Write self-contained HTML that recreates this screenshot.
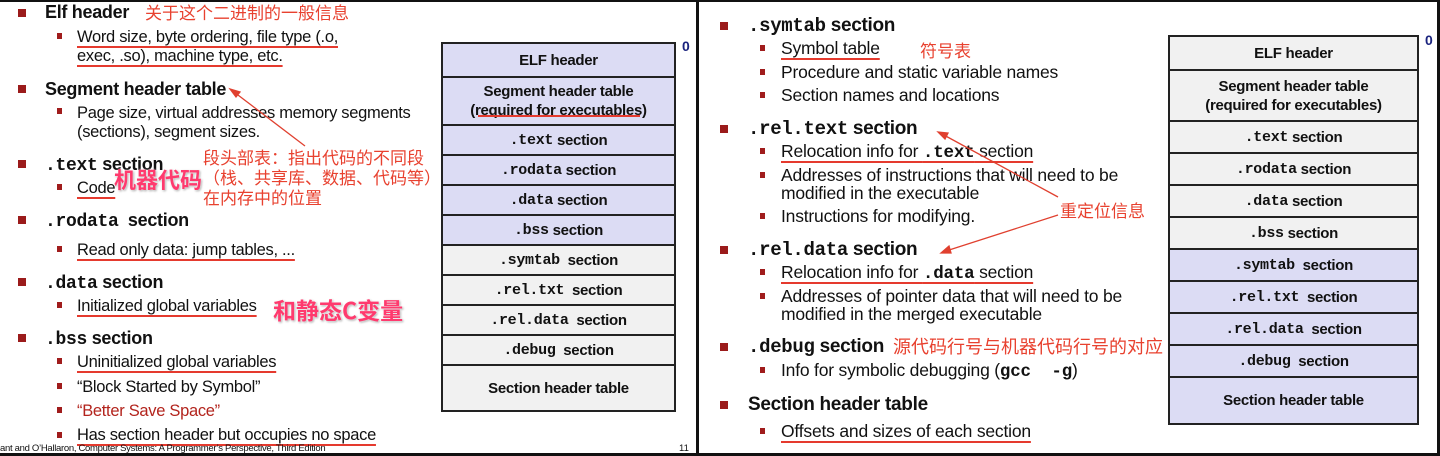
<!DOCTYPE html>
<html><head><meta charset="utf-8"><style>
*{margin:0;padding:0;box-sizing:border-box}
body{width:1440px;height:456px;background:#fff;position:relative;overflow:hidden;font-family:"Liberation Sans","Noto Sans CJK SC",sans-serif;color:#111}
.t{position:absolute;white-space:nowrap;line-height:1}
.h{font-size:19px;font-weight:bold;letter-spacing:-0.3px}
.s{font-size:17.5px;letter-spacing:-0.2px}
.lh{font-size:18px}
.ls{font-size:16.5px;letter-spacing:-0.3px}
.m{font-family:"Liberation Mono",monospace;font-weight:bold}
.b1{position:absolute;width:8px;height:8px;background:#9b1b1b}
.b2{position:absolute;width:5px;height:6px;background:#a01c1c}
.u{position:absolute;height:2px;background:#e53a2e}
.ud{text-decoration:underline;text-decoration-color:#e53a2e;text-decoration-thickness:2px;text-underline-offset:4px;text-decoration-skip-ink:none}
.an{position:absolute;white-space:nowrap;color:#e8412f;font-size:17px;line-height:20px;font-family:"Noto Sans CJK SC",sans-serif}
.pk{position:absolute;white-space:nowrap;color:#ff3a6e;font-weight:bold;font-family:"Noto Sans CJK SC",sans-serif;text-shadow:0 0 2px #fff,1px 1px 2px #999}
.tb{position:absolute;border:2px solid #222}
.tb div{border-top:2px solid #222;display:flex;align-items:center;justify-content:center;text-align:center;font-weight:bold;font-size:15px;line-height:19px;letter-spacing:-0.3px}
.tb div:first-child{border-top:none}
.L{background:#dcdcf4}.G{background:#f1f1f1}
.zero{position:absolute;color:#1a237e;font-weight:bold;font-size:14px}
.ln{position:absolute;background:#111}
</style></head><body>
<div class="ln" style="left:0;top:0;width:1440px;height:2px"></div>
<div class="ln" style="left:696px;top:0;width:3px;height:456px"></div>
<div class="ln" style="left:1437px;top:0;width:3px;height:456px"></div>
<div class="ln" style="left:0;top:453px;width:1440px;height:3px"></div>

<!-- LEFT -->
<div class="b1" style="left:18px;top:9px"></div>
<div class="t h lh" style="left:45px;top:3px">Elf header</div>
<div class="an" style="left:145px;top:2px">关于这个二进制的一般信息</div>
<div class="b2" style="left:57px;top:33px"></div>
<div class="t ls ud" style="left:77px;top:29px">Word size, byte ordering, file type (.o,</div>
<div class="t ls ud" style="left:77px;top:48px">exec, .so), machine type, etc.</div>

<div class="b1" style="left:18px;top:85px"></div>
<div class="t h lh" style="left:45px;top:80px">Segment header table</div>
<div class="b2" style="left:57px;top:108px"></div>
<div class="t ls" style="left:77px;top:105px">Page size, virtual addresses memory segments</div>
<div class="t ls" style="left:77px;top:124px">(sections), segment sizes.</div>

<div class="b1" style="left:18px;top:160px"></div>
<div class="t h lh" style="left:45px;top:155px"><span class="m">.text</span> section</div>
<div class="b2" style="left:57px;top:184px"></div>
<div class="t ls ud" style="left:77px;top:180px">Code</div>
<div class="pk" style="left:114px;top:163px;font-size:22px">机器代码</div>
<div class="an" style="left:203px;top:147px">段头部表：指出代码的不同段<br>（栈、共享库、数据、代码等）<br>在内存中的位置</div>

<div class="b1" style="left:18px;top:216px"></div>
<div class="t h lh" style="left:45px;top:211px"><span class="m">.rodata</span>&nbsp; section</div>
<div class="b2" style="left:57px;top:246px"></div>
<div class="t ls ud" style="left:77px;top:242px">Read only data: jump tables, ...</div>

<div class="b1" style="left:18px;top:278px"></div>
<div class="t h lh" style="left:45px;top:273px"><span class="m">.data</span> section</div>
<div class="b2" style="left:57px;top:302px"></div>
<div class="t ls ud" style="left:77px;top:298px">Initialized global variables</div>
<div class="pk" style="left:273px;top:292px;font-size:23px">和静态C变量</div>

<div class="b1" style="left:18px;top:334px"></div>
<div class="t h lh" style="left:45px;top:329px"><span class="m">.bss</span> section</div>
<div class="b2" style="left:57px;top:358px"></div>
<div class="t ls ud" style="left:77px;top:354px">Uninitialized global variables</div>
<div class="b2" style="left:57px;top:383px"></div>
<div class="t ls" style="left:77px;top:379px">“Block Started by Symbol”</div>
<div class="b2" style="left:57px;top:407px"></div>
<div class="t ls" style="left:77px;top:403px;color:#b3241d">“Better Save Space”</div>
<div class="b2" style="left:57px;top:432px"></div>
<div class="t ls ud" style="left:77px;top:427px">Has section header but occupies no space</div>
<div class="t" style="left:0;top:444px;font-size:9.5px;letter-spacing:-0.3px">ant and O’Hallaron, Computer Systems: A Programmer’s Perspective, Third Edition</div>
<div class="t" style="left:679px;top:444px;font-size:9.5px">11</div>

<div class="tb" style="left:441px;top:42px;width:235px">
<div class="L" style="height:32px">ELF header</div>
<div class="L" style="height:48px">Segment header table<br>(required for executables)</div>
<div class="L" style="height:30px"><span class="m">.text</span>&nbsp;section</div>
<div class="L" style="height:30px"><span class="m">.rodata</span>&nbsp;section</div>
<div class="L" style="height:30px"><span class="m">.data</span>&nbsp;section</div>
<div class="L" style="height:30px"><span class="m">.bss</span>&nbsp;section</div>
<div class="G" style="height:30px"><span class="m">.symtab</span>&nbsp; section</div>
<div class="G" style="height:30px"><span class="m">.rel.txt</span>&nbsp; section</div>
<div class="G" style="height:30px"><span class="m">.rel.data</span>&nbsp; section</div>
<div class="G" style="height:30px"><span class="m">.debug</span>&nbsp; section</div>
<div class="G" style="height:46px">Section header table</div>
</div>
<div class="u" style="left:478px;top:115px;width:162px;height:1.5px"></div>
<div class="zero" style="left:682px;top:38px">0</div>

<!-- RIGHT -->
<div class="b1" style="left:720px;top:22px"></div>
<div class="t h" style="left:748px;top:16px"><span class="m">.symtab</span> section</div>
<div class="b2" style="left:760px;top:45px"></div>
<div class="t s ud" style="left:781px;top:40px">Symbol table</div>
<div class="an" style="left:920px;top:40px">符号表</div>
<div class="b2" style="left:760px;top:69px"></div>
<div class="t s" style="left:781px;top:64px">Procedure and static variable names</div>
<div class="b2" style="left:760px;top:92px"></div>
<div class="t s" style="left:781px;top:87px">Section names and locations</div>

<div class="b1" style="left:720px;top:125px"></div>
<div class="t h" style="left:748px;top:119px"><span class="m">.rel.text</span> section</div>
<div class="b2" style="left:760px;top:148px"></div>
<div class="t s ud" style="left:781px;top:143px">Relocation info for <span class="m">.text</span> section</div>
<div class="b2" style="left:760px;top:172px"></div>
<div class="t s" style="left:781px;top:167px">Addresses of instructions that will need to be</div>
<div class="t s" style="left:781px;top:185px">modified in the executable</div>
<div class="b2" style="left:760px;top:213px"></div>
<div class="t s" style="left:781px;top:208px">Instructions for modifying.</div>
<div class="an" style="left:1060px;top:200px">重定位信息</div>

<div class="b1" style="left:720px;top:246px"></div>
<div class="t h" style="left:748px;top:240px"><span class="m">.rel.data</span> section</div>
<div class="b2" style="left:760px;top:269px"></div>
<div class="t s ud" style="left:781px;top:264px">Relocation info for <span class="m">.data</span> section</div>
<div class="b2" style="left:760px;top:293px"></div>
<div class="t s" style="left:781px;top:288px">Addresses of pointer data that will need to be</div>
<div class="t s" style="left:781px;top:306px">modified in the merged executable</div>

<div class="b1" style="left:720px;top:343px"></div>
<div class="t h" style="left:748px;top:337px"><span class="m">.debug</span> section</div>
<div class="an" style="left:893px;top:336px;font-size:18px">源代码行号与机器代码行号的对应</div>
<div class="b2" style="left:760px;top:367px"></div>
<div class="t s" style="left:781px;top:362px">Info for symbolic debugging (<span class="m">gcc&nbsp; -g</span>)</div>

<div class="b1" style="left:720px;top:401px"></div>
<div class="t h" style="left:748px;top:395px">Section header table</div>
<div class="b2" style="left:760px;top:428px"></div>
<div class="t s ud" style="left:781px;top:423px">Offsets and sizes of each section</div>

<div class="tb" style="left:1168px;top:35px;width:251px">
<div class="G" style="height:32px">ELF header</div>
<div class="G" style="height:51px">Segment header table<br>(required for executables)</div>
<div class="G" style="height:32px"><span class="m">.text</span>&nbsp;section</div>
<div class="G" style="height:32px"><span class="m">.rodata</span>&nbsp;section</div>
<div class="G" style="height:32px"><span class="m">.data</span>&nbsp;section</div>
<div class="G" style="height:32px"><span class="m">.bss</span>&nbsp;section</div>
<div class="L" style="height:32px"><span class="m">.symtab</span>&nbsp; section</div>
<div class="L" style="height:32px"><span class="m">.rel.txt</span>&nbsp; section</div>
<div class="L" style="height:32px"><span class="m">.rel.data</span>&nbsp; section</div>
<div class="L" style="height:32px"><span class="m">.debug</span>&nbsp; section</div>
<div class="L" style="height:47px">Section header table</div>
</div>
<div class="zero" style="left:1425px;top:32px">0</div>

<svg style="position:absolute;left:0;top:0" width="1440" height="456">
<g stroke="#e0402f" stroke-width="1.3" fill="#e0402f">
<line x1="305" y1="146" x2="234" y2="92"/><polygon points="230,89 240,92 236,97"/>
<line x1="1058" y1="197" x2="942" y2="134"/><polygon points="938,132 948,133 945,139"/>
<line x1="1058" y1="215" x2="946" y2="251"/><polygon points="941,253 949,246 951,253"/>
</g></svg>
</body></html>
